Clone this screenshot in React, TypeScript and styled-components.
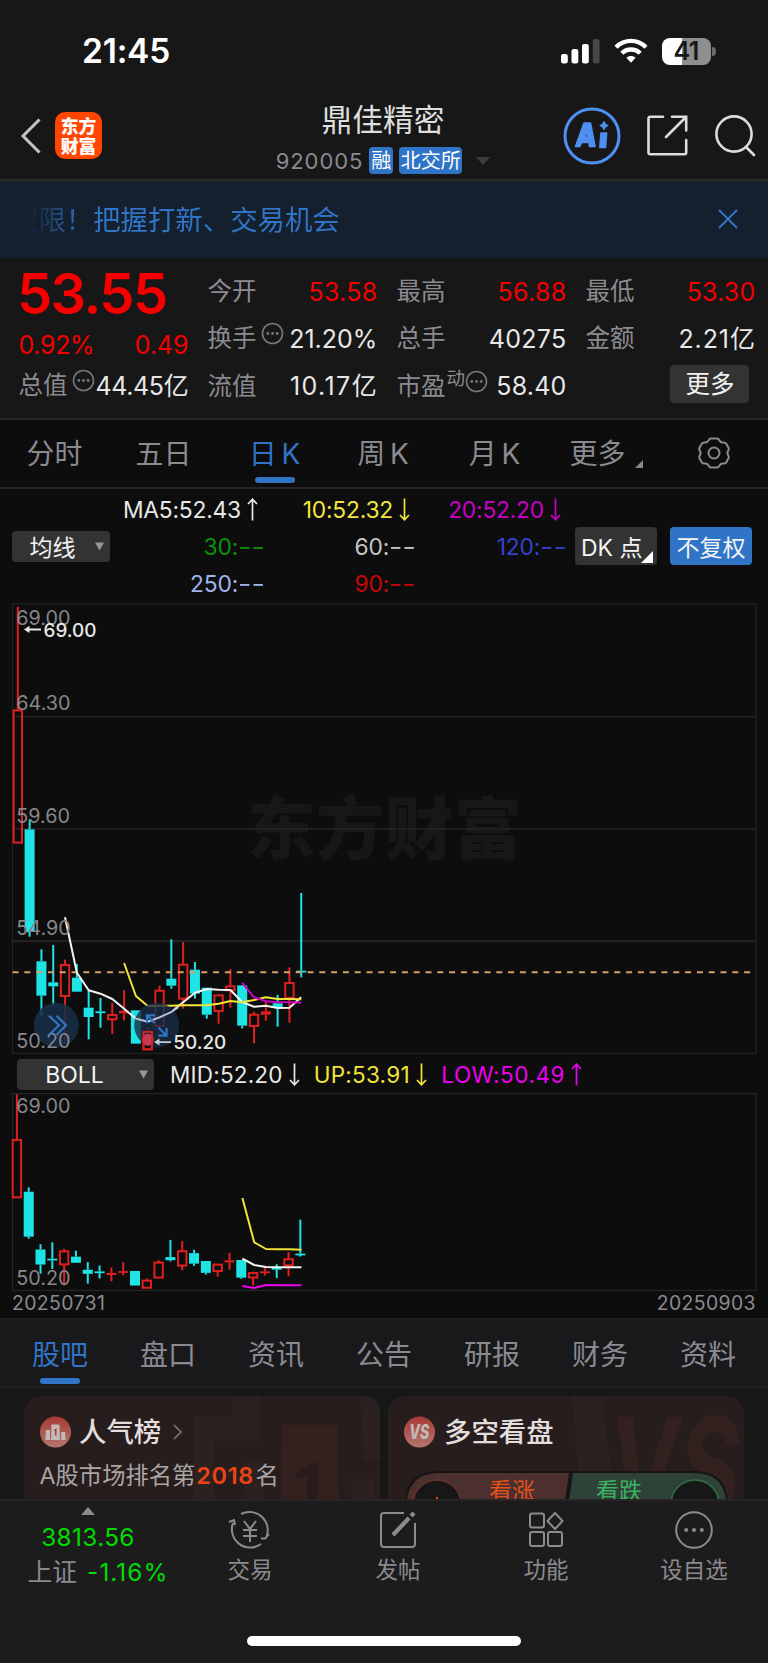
import React from "react";
import styled, { createGlobalStyle } from "styled-components";

const BLUE = "#2f74c6";
const GRAY = "#8b8a90";
const RED = "#f40000";
const CANDLE_RED = "#e02020";
const CYAN = "#1fe4e6";

const Global = createGlobalStyle`
  * { box-sizing: border-box; }
  body { margin: 0; background: #171717; }
`;

const Screen = styled.div`
  width: 768px;
  height: 1663px;
  overflow: hidden;
  display: flex;
  flex-direction: column;
  background: #171717;
  color: #e6e6e6;
  font-family: Inter, "Noto Sans CJK SC", sans-serif;
  white-space: nowrap;
`;

const Label = styled.span<{ size?: number; color?: string; weight?: number; spacing?: number; lead?: number }>`
  font-size: ${(p) => p.size ?? 24.5}px;
  color: ${(p) => p.color ?? "inherit"};
  font-weight: ${(p) => p.weight ?? 400};
  letter-spacing: ${(p) => p.spacing ?? 0}px;
  margin-left: ${(p) => p.lead ?? 0}px;
  line-height: 1.2;
`;

/* ---------- status bar ---------- */
const StatusBar = styled.div`
  height: 102px;
  padding: 0 52px 0 82px;
  display: flex;
  justify-content: space-between;
  align-items: center;
`;
const StatusIcons = styled.div`
  display: flex;
  align-items: center;
  gap: 14px;
`;
const Battery = styled.div`
  width: 49px;
  height: 27px;
  border-radius: 8px;
  background: linear-gradient(90deg, #fff 41%, #8e8e8e 41%);
  color: #171717;
  font-size: 25px;
  font-weight: 600;
  letter-spacing: -0.6px;
  line-height: 27px;
  text-align: center;
`;
const BatteryTip = styled.div`
  width: 4px;
  height: 9px;
  margin-left: -12.5px;
  border-radius: 0 4px 4px 0;
  background: #6b6b6b;
`;

/* ---------- navigation ---------- */
const NavBar = styled.div`
  height: 79px;
  padding: 0 12px 0 20px;
  display: flex;
  justify-content: space-between;
  border-bottom: 2px solid #2b2a29;
`;
const NavSide = styled.div<{ gap: number; wide: number }>`
  display: flex;
  align-items: center;
  gap: ${(p) => p.gap}px;
  width: ${(p) => p.wide}px;
  padding-bottom: 10px;
`;
const Logo = styled.div`
  width: 47px;
  height: 47px;
  border-radius: 10px;
  background: #ff4600;
  color: #fff;
  font: 900 17.8px/20px "Noto Sans CJK SC", sans-serif;
  text-align: center;
  padding-top: 3px;
  white-space: normal;
`;
const NavTitle = styled.div`
  display: flex;
  flex-direction: column;
  align-items: center;
  gap: 8px;
  margin-right: 17px;
`;
const SubTitle = styled.div`
  display: flex;
  align-items: center;
  gap: 6px;
  height: 28px;
`;
const Badge = styled.span<{ wide: number }>`
  width: ${(p) => p.wide}px;
  height: 27px;
  border-radius: 4px;
  background: ${BLUE};
  color: #fff;
  font-size: 20px;
  line-height: 28px;
  display: flex;
  justify-content: center;
`;

/* ---------- banner ---------- */
const Banner = styled.div`
  height: 77px;
  padding: 0 30px 2px 11px;
  display: flex;
  align-items: center;
  justify-content: space-between;
  background: #15202e;
  color: ${BLUE};
`;
const BannerText = styled.div`
  font-size: 27.4px;
  line-height: 40px;
  padding-top: 2px;
  mask-image: linear-gradient(90deg, transparent 18px, #000 75px);
`;

/* ---------- quote ---------- */
const Quote = styled.div`
  height: 162px;
  padding: 10px 13px 0 18.4px;
  display: grid;
  grid-template-columns: repeat(4, 169px);
  column-gap: 20px;
  border-bottom: 2px solid #262628;
`;
const QuoteColumn = styled.div`
  display: flex;
  flex-direction: column;
`;
const QuoteRow = styled.div<{ tall?: number }>`
  height: ${(p) => p.tall ?? 47.3}px;
  display: flex;
  align-items: center;
`;
const Value = styled.span<{ color?: string; spacing?: number }>`
  margin-left: auto;
  margin-right: ${(p) => -1 - (p.spacing ?? 0.3) * 0.5}px;
  font-size: 25px;
  line-height: 30px;
  letter-spacing: ${(p) => p.spacing ?? 0.3}px;
  color: ${(p) => p.color ?? "#e8e8e8"};
`;
const Superscript = styled.span`
  font-size: 18.5px;
  line-height: 20px;
  color: ${GRAY};
  margin: 0 0 17px 1px;
`;
const MoreButton = styled.div`
  width: 79px;
  height: 38px;
  margin: -5px 5px 0 auto;
  border-radius: 4px;
  background: #333333;
  color: #f2f2f2;
  font-size: 24.5px;
  line-height: 38px;
  text-align: center;
`;

/* ---------- tabs ---------- */
const PeriodTabs = styled.div`
  height: 69px;
  display: flex;
  background: #0d0d0d;
  border-bottom: 2px solid #262628;
`;
const Tab = styled.div<{ wide?: number; active?: boolean; rise?: number }>`
  ${(p) => (p.wide ? `width: ${p.wide}px;` : "flex: 1;")}
  height: 100%;
  display: flex;
  flex-direction: column;
  align-items: center;
  justify-content: flex-end;
  padding-bottom: ${(p) => p.rise ?? 4}px;
  color: ${(p) => (p.active ? BLUE : GRAY)};
  font-size: 28px;
  line-height: 40px;
  word-spacing: -3px;
  &::after {
    content: "";
    width: 40px;
    height: 6px;
    margin-top: 3px;
    border-radius: 3px;
    background: ${(p) => (p.active ? BLUE : "transparent")};
  }
`;
const TabLine = styled.div`
  display: flex;
  align-items: center;
  height: 40px;
`;

/* ---------- indicator rows ---------- */
const ChartArea = styled.div`
  height: 829px;
  background: #0d0d0d;
  display: flex;
  flex-direction: column;
`;
const Averages = styled.div`
  height: 114px;
  padding: 0 16px 0 12px;
  display: flex;
  align-items: center;
`;
const AverageGrid = styled.div`
  width: 467px;
  height: 111px;
  display: flex;
  flex-direction: column;
`;
const AverageRow = styled.div`
  height: 37px;
  display: flex;
  align-items: center;
`;
const AverageCell = styled.div<{ color: string; wide: number }>`
  width: ${(p) => p.wide}px;
  display: flex;
  align-items: center;
  justify-content: flex-end;
  color: ${(p) => p.color};
  font-size: 22.8px;
  letter-spacing: -0.2px;
`;
const Dashes = styled.span`
  display: inline-block;
  letter-spacing: 0;
  margin-left: 6px;
  transform: scaleX(1.28);
  transform-origin: right;
`;
const Picker = styled.div<{ wide: number; tall: number; fill?: string }>`
  flex: none;
  width: ${(p) => p.wide}px;
  height: ${(p) => p.tall}px;
  padding: 0 6px;
  display: flex;
  align-items: center;
  justify-content: space-between;
  border-radius: 4px;
  background: ${(p) => p.fill ?? "#333333"};
  color: #f4f4f4;
  font-size: 23px;
`;
const PickerText = styled.span<{ shift?: number }>`
  flex: 1;
  padding-right: ${(p) => p.shift ?? 0}px;
  text-align: center;
`;
const SideButtons = styled.div`
  display: flex;
  gap: 13px;
  margin-left: -2px;
`;
const BollRow = styled.div`
  height: 39px;
  padding: 2px 0 0 17px;
  display: flex;
  align-items: center;
`;
const BollValue = styled.div<{ color: string; lead: number; spacing: number }>`
  display: flex;
  align-items: center;
  margin-left: ${(p) => p.lead}px;
  color: ${(p) => p.color};
  font-size: 22.5px;
  letter-spacing: ${(p) => p.spacing}px;
`;
const ChartSvg = styled.svg`
  display: block;
  flex: none;
  font-family: Inter, "Noto Sans CJK SC", sans-serif;
`;
const Dates = styled.div`
  height: 27px;
  padding: 0 12px 2px;
  display: flex;
  justify-content: space-between;
  align-items: center;
`;

/* ---------- community section ---------- */
const SectionTabs = styled.div`
  height: 70px;
  padding: 0 6px;
  display: flex;
  background: #19191b;
  border-bottom: 1px solid #222225;
  border-top: 1px solid #222225;
`;
const Cards = styled.div`
  height: 111px;
  overflow: hidden;
  padding: 8px 24px 0;
  display: grid;
  grid-template-columns: 1fr 1fr;
  gap: 8px;
`;
const Card = styled.div`
  position: relative;
  height: 160px;
  overflow: hidden;
  border-radius: 17px;
  background: #271d1d;
`;
const CardArt = styled.svg`
  position: absolute;
  inset: 0;
`;
const CardBody = styled.div`
  position: relative;
  padding: 17px 16px 0;
`;
const CardHead = styled.div`
  display: flex;
  align-items: center;
  height: 38px;
`;
const RankLine = styled.div`
  display: flex;
  align-items: center;
  height: 40px;
  margin-top: 5px;
  color: #aaa5a5;
`;
const Poll = styled.div`
  position: relative;
  height: 56px;
  margin: 20px 0 0 1px;
  width: 323px;
`;
const PollLabels = styled.div`
  position: absolute;
  inset: 7px 0 auto 0;
  display: flex;
  padding-left: 84px;
  gap: 61px;
`;

/* ---------- bottom bar ---------- */
const BottomBar = styled.div`
  height: 164px;
  background: #1c1c1c;
  border-top: 2px solid #262424;
  display: flex;
  flex-direction: column;
  align-items: center;
`;
const BottomItems = styled.div`
  width: 768px;
  height: 135px;
  display: flex;
`;
const IndexBox = styled.div`
  width: 176px;
  padding-top: 6px;
  display: flex;
  flex-direction: column;
  align-items: center;
`;
const IndexRow = styled.div<{ top: number; shift: number }>`
  display: flex;
  align-items: center;
  height: 34px;
  margin-top: ${(p) => p.top}px;
  margin-left: ${(p) => p.shift}px;
`;
const BottomItem = styled.div`
  width: 148px;
  padding-top: 8px;
  display: flex;
  flex-direction: column;
  align-items: center;
  gap: 2px;
  color: ${GRAY};
  font-size: 22.5px;
  line-height: 34px;
`;
const HomeIndicator = styled.div`
  width: 274px;
  height: 10px;
  border-radius: 5px;
  background: #fff;
`;

/* ---------- small drawings ---------- */
const DotsSvg = styled.svg<{ lead: number }>`
  flex: none;
  margin: 0 0 10px ${(p) => p.lead}px;
`;
const Dots = ({ lead = 0 }: { lead?: number }) => (
  <DotsSvg lead={lead} width="23" height="23" viewBox="0 0 23 23" fill="none">
    <circle cx="11.5" cy="11.5" r="10" stroke="#77767a" strokeWidth="1.6" />
    <g fill="#77767a">
      <circle cx="6.8" cy="11.5" r="1.4" />
      <circle cx="11.5" cy="11.5" r="1.4" />
      <circle cx="16.2" cy="11.5" r="1.4" />
    </g>
  </DotsSvg>
);

const ArrowSvg = styled.svg`
  margin-left: 6px;
`;
const Arrow = ({ down }: { down?: boolean }) => (
  <ArrowSvg width="11" height="23" viewBox="0 0 11 23" fill="none" stroke="currentColor" strokeWidth="1.7">
    {down ? <path d="M5.5 0.5V21.5M1 17L5.5 21.8L10 17" /> : <path d="M5.5 22.5V1.5M1 6L5.5 1.2L10 6" />}
  </ArrowSvg>
);

const Caret = () => (
  <svg width="9" height="9" viewBox="0 0 9 9">
    <path d="M0 0.5H9L4.5 8.5Z" fill="#98979c" />
  </svg>
);
const TitleCaret = styled.svg`
  margin-left: 8px;
`;
const MoreCorner = styled.svg`
  margin: 20px 0 0 9px;
`;
const PointCorner = styled.svg`
  flex: none;
  margin: 22px 0 0 -2px;
`;
const GearSvg = styled.svg`
  margin: 0 0 2px 1px;
`;
const HeadChevron = styled.svg`
  margin-left: 12px;
`;

/* ---------- chart data ----------
   Each candle: rising flag, high, body top, body bottom, low.
   Levels count down from the top of the pane in thirds of a pixel. */
type Candle = [boolean, number, number, number, number];
const candles: Candle[] = [
  [true, 20, 330, 729, 729],
  [false, 658, 688, 996, 1010],
  [false, 1048, 1084, 1187, 1250],
  [false, 1035, 1147, 1159, 1218],
  [true, 1079, 1094, 1189, 1330],
  [false, 1092, 1133, 1175, 1175],
  [false, 1170, 1223, 1251, 1318],
  [false, 1194, 1234, 1239, 1283],
  [true, 1208, 1244, 1259, 1302],
  [true, 1170, 1232, 1240, 1261],
  [false, 1231, 1231, 1331, 1331],
  [true, 1282, 1295, 1349, 1349],
  [true, 1157, 1171, 1279, 1279],
  [false, 1018, 1136, 1157, 1166],
  [true, 1026, 1093, 1197, 1226],
  [false, 1086, 1109, 1181, 1196],
  [false, 1163, 1163, 1244, 1256],
  [true, 1184, 1185, 1234, 1271],
  [true, 1107, 1158, 1172, 1223],
  [false, 1156, 1156, 1277, 1285],
  [true, 1236, 1243, 1279, 1330],
  [true, 1205, 1234, 1244, 1262],
  [false, 1185, 1210, 1222, 1280],
  [true, 1102, 1148, 1195, 1268],
  [false, 879, 1112, 1117, 1132],
];
const ma5 = [952, 1118, 1171, 1181, 1197, 1226, 1256, 1265, 1252, 1236, 1207, 1178, 1167, 1169, 1170, 1206, 1220, 1217, 1224, 1223, 1192];
const ma10 = [1089, 1188, 1218, 1217, 1217, 1216, 1216, 1216, 1211, 1203, 1207, 1200, 1192, 1197, 1197, 1198];
const ma20 = [1148, 1192, 1204, 1207, 1207, 1208];
const STEP = 11.81;

const mainY = (v: number) => v / 3 - 3;
const bollY = (v: number) => 1.3 + ((v - 20) / 1330) * 194;
const bandY = (v: number) => v / 3 - 38;

const line = (values: number[], first: number, x0: number, y: (v: number) => number) =>
  values.map((v, i) => `${(x0 + (first + i) * STEP).toFixed(1)},${y(v).toFixed(1)}`).join(" ");

const Candles = ({ x0, y }: { x0: number; y: (v: number) => number }) => (
  <g>
    {candles.map(([up, high, top, bottom, low], i) => {
      const x = x0 + i * STEP;
      const bodyTop = y(top);
      const height = Math.max(y(bottom) - bodyTop, 1.8);
      const color = up ? CANDLE_RED : CYAN;
      const hollow = up && height > 3.6;
      return (
        <g key={i} stroke={color} strokeWidth="2">
          {high < top && <line x1={x} x2={x} y1={y(high)} y2={bodyTop} />}
          {low > bottom && <line x1={x} x2={x} y1={y(bottom)} y2={y(low)} />}
          {hollow ? (
            <rect x={x - 4.2} y={bodyTop + 0.4} width="8.4" height={Math.max(height - 0.8, 2)} fill="none" />
          ) : (
            <rect x={x - 5} y={bodyTop} width="10" height={height} fill={color} stroke="none" />
          )}
        </g>
      );
    })}
  </g>
);

const MainChart = () => (
  <ChartSvg width="768" height="451" viewBox="0 0 768 451">
    <text x="247" y="251" fontSize="68.5" fontWeight="900" fill="#171717" textLength="275" lengthAdjust="spacing">东方财富</text>
    <g stroke="#222223" strokeWidth="1.8" fill="none">
      <rect x="12.5" y="0.8" width="743.5" height="449.6" strokeWidth="1.2" />
      <path d="M12 113.7H756M12 225.9H756M12 338H756" />
    </g>
    <Candles x0={17.8} y={mainY} />
    <path d="M12.5 369.2H752" stroke="#d6a064" strokeWidth="2" strokeDasharray="6 5.8" />
    <g fill="none" strokeWidth="2" strokeLinejoin="round">
      <polyline points={line(ma5, 4, 17.8, mainY)} stroke="#f4f4f4" />
      <polyline points={line(ma10, 9, 17.8, mainY)} stroke="#f2e53a" />
      <polyline points={line(ma20, 19, 17.8, mainY)} stroke="#c800c8" />
    </g>
    <g fontSize="19.8" fill="#87868b">
      <text x="16.3" y="21.7">69.00</text>
      <text x="16.3" y="107.2">64.30</text>
      <text x="16.3" y="219.9">59.60</text>
      <text x="16.3" y="332">54.90</text>
    </g>
    <g fill="#182d47" fillOpacity="0.88">
      <circle cx="56.3" cy="422.3" r="22.5" />
      <circle cx="156.7" cy="422.3" r="22.5" fillOpacity="0.8" />
    </g>
    <text x="16.3" y="444.8" fontSize="19.8" fill="#87868b">50.20</text>
    <polyline points="135.9,415.7 147.7,418.7 159.5,414.3 171.3,409 178,404.5" fill="none" stroke="#b9c6d8" strokeWidth="1.8" />
    <circle cx="147.7" cy="436.7" r="6" fill="#c43a52" />
    <path d="M143.5 428.9V446.5H152V428.9Z" fill="none" stroke={CANDLE_RED} strokeWidth="1.7" />
    <g fill="none" stroke={BLUE} strokeWidth="2.2">
      <path d="M49 412.7L59 422.3L49 432M56.5 412.7L66 422.3L56.5 432" />
      <path d="M155 412.3H147V420.3M147.5 412.8L154.5 420M158.5 432.7H166.5V424.7M158.5 424.5L166 432.2" />
    </g>
    <g fill="#e6e6e6" stroke="none" fontSize="18.9" fontWeight="500">
      <path d="M24 26.4L29.5 22.8V30ZM29 25.6H41V27.4H29Z" />
      <text x="43.5" y="33.5">69.00</text>
      <path d="M154 439L159.5 435.4V442.6ZM159 438.2H171V440H159Z" fill="#c3cad6" />
      <text x="173.3" y="446.3">50.20</text>
    </g>
  </ChartSvg>
);

const BollChart = () => (
  <ChartSvg width="768" height="198" viewBox="0 0 768 198">
    <rect x="12.5" y="0.6" width="743.5" height="196.8" fill="none" stroke="#252526" strokeWidth="1.2" />
    <Candles x0={16.9} y={bollY} />
    <g fontSize="19.8" fill="#87868b">
      <text x="16.3" y="19.5">69.00</text>
      <text x="16.3" y="192.3">50.20</text>
    </g>
    <g fill="none" strokeWidth="2" strokeLinejoin="round">
      <polyline points={line([429, 562, 582, 583, 583, 584], 19, 18, bandY)} stroke="#f2e53a" />
      <polyline points={line([611, 630, 636, 637, 637, 637], 19, 18, bandY)} stroke="#f4f4f4" />
      <polyline points={line([693, 699, 690, 691, 691, 691], 19, 18, bandY)} stroke="#f000f0" />
    </g>
  </ChartSvg>
);

const WifiIcon = () => (
  <svg width="34" height="26" viewBox="0 0 34 26" fill="none" stroke="#fff" strokeWidth="4.4">
    <path d="M2 9.2C10.5 0.8 23.5 0.8 32 9.2" />
    <path d="M7.8 15.3C13 10.2 21 10.2 26.2 15.3" />
    <path d="M12.4 19.7C15 17.3 19 17.3 21.6 19.7L17 24.8Z" fill="#fff" stroke="none" />
  </svg>
);

const AiIcon = () => (
  <svg width="58" height="58" viewBox="0 0 58 58">
    <circle cx="29" cy="29" r="27" fill="none" stroke="#4f8ff2" strokeWidth="3" />
    <g fill="#4f8ff2" stroke="#4f8ff2" strokeWidth="1.6" strokeLinejoin="round">
      <path fillRule="evenodd" d="M21 16H27.5L32 39.5H26.5L25.9 35.5H18.6L16.8 39.5H12.5ZM24.2 24L21.8 30.2H25Z" />
      <path d="M38 26H43.6L42.5 40.5H36.8Z" />
      <path d="M41 15L42.3 17.4L44.6 18.6L42.3 19.8L41 22.2L39.7 19.8L37.4 18.6L39.7 17.4Z" />
    </g>
  </svg>
);

const periodTabs: [string, number][] = [["分时", 109], ["五日", 109], ["日 K", 113], ["周 K", 104], ["月 K", 119]];
const sections = ["股吧", "盘口", "资讯", "公告", "研报", "财务", "资料"];

export default function App() {
  return (
    <Screen>
      <Global />
      <StatusBar>
        <Label size={33.5} weight={600} color="#fff" spacing={-0.2}>21:45</Label>
        <StatusIcons>
          <svg width="39" height="25" viewBox="0 0 39 25" fill="#fff">
            <rect x="0" y="15" width="6.8" height="9.5" rx="2.2" />
            <rect x="10.5" y="10" width="6.8" height="14.5" rx="2.2" />
            <rect x="21" y="5" width="6.8" height="19.5" rx="2.2" />
            <rect x="31.8" y="0" width="6.8" height="24.5" rx="2.2" fill="#474747" />
          </svg>
          <WifiIcon />
          <Battery>41</Battery>
          <BatteryTip />
        </StatusIcons>
      </StatusBar>

      <NavBar>
        <NavSide gap={14} wide={200}>
          <svg width="21" height="36" viewBox="0 0 21 36" fill="none" stroke="#c4c4c4" strokeWidth="3">
            <path d="M19.5 1.5L3 18L19.5 34.5" />
          </svg>
          <Logo>东方<br />财富</Logo>
        </NavSide>
        <NavTitle>
          <Label size={30.8} color="#dedede">鼎佳精密</Label>
          <SubTitle>
            <Label size={22} color={GRAY} spacing={0.9}>920005</Label>
            <Badge wide={24}>融</Badge>
            <Badge wide={63}>北交所</Badge>
            <TitleCaret width="14" height="8" viewBox="0 0 14 8">
              <path d="M0 0H14L7 8Z" fill="#3b3b3d" />
            </TitleCaret>
          </SubTitle>
        </NavTitle>
        <NavSide gap={26} wide={193}>
          <AiIcon />
          <svg width="41" height="41" viewBox="0 0 41 41" fill="none" stroke="#dcdcdc" strokeWidth="2.6" strokeLinecap="round">
            <path d="M16 1.7H3.2Q1.5 1.7 1.5 3.4V37.5Q1.5 39.2 3.2 39.2H37.5Q39.2 39.2 39.2 37.5V25M25 1.7H39.2V15.5M38 3L19 22" />
          </svg>
          <svg width="42" height="42" viewBox="0 0 42 42" fill="none" stroke="#dcdcdc" strokeWidth="2.6" strokeLinecap="round">
            <circle cx="20" cy="19" r="17.6" />
            <path d="M32 32L40 40" />
          </svg>
        </NavSide>
      </NavBar>

      <Banner>
        <BannerText>权限！把握打新、交易机会</BannerText>
        <svg width="20" height="20" viewBox="0 0 20 20" stroke={BLUE} strokeWidth="2">
          <path d="M1 1L19 19M19 1L1 19" />
        </svg>
      </Banner>

      <Quote>
        <QuoteColumn>
          <QuoteRow tall={54}><Label size={56} weight={600} color={RED} spacing={-1.5} lead={-1.5}>53.55</Label></QuoteRow>
          <QuoteRow tall={46}>
            <Label size={25} color={RED} spacing={-0.3}>0.92%</Label>
            <Value color={RED} spacing={-0.1}>0.49</Value>
          </QuoteRow>
          <QuoteRow tall={35}>
            <Label color={GRAY}>总值</Label>
            <Dots lead={5} />
            <Value spacing={-0.35}>44.45亿</Value>
          </QuoteRow>
        </QuoteColumn>
        <QuoteColumn>
          <QuoteRow><Label color={GRAY}>今开</Label><Value color={RED}>53.58</Value></QuoteRow>
          <QuoteRow><Label color={GRAY}>换手</Label><Dots lead={5} /><Value spacing={0}>21.20%</Value></QuoteRow>
          <QuoteRow><Label color={GRAY}>流值</Label><Value spacing={1.4}>10.17亿</Value></QuoteRow>
        </QuoteColumn>
        <QuoteColumn>
          <QuoteRow><Label color={GRAY}>最高</Label><Value color={RED}>56.88</Value></QuoteRow>
          <QuoteRow><Label color={GRAY}>总手</Label><Value>40275</Value></QuoteRow>
          <QuoteRow><Label color={GRAY}>市盈</Label><Superscript>动</Superscript><Dots /><Value spacing={0.2}>58.40</Value></QuoteRow>
        </QuoteColumn>
        <QuoteColumn>
          <QuoteRow><Label color={GRAY}>最低</Label><Value color={RED} spacing={0.2}>53.30</Value></QuoteRow>
          <QuoteRow><Label color={GRAY}>金额</Label><Value spacing={0.9}>2.21亿</Value></QuoteRow>
          <QuoteRow><MoreButton>更多</MoreButton></QuoteRow>
        </QuoteColumn>
      </Quote>

      <PeriodTabs>
        {periodTabs.map(([name, wide], i) => (
          <Tab key={name} wide={wide} active={i === 2}>{name}</Tab>
        ))}
        <Tab wide={104}>
          <TabLine>
            更多
            <MoreCorner width="8" height="8" viewBox="0 0 8 8">
              <path d="M8 0V8H0Z" fill={GRAY} />
            </MoreCorner>
          </TabLine>
        </Tab>
        <Tab>
          <TabLine>
            <GearSvg width="34" height="34" viewBox="0 0 34 34" fill="none" stroke={GRAY} strokeWidth="2">
              <path strokeLinejoin="round" d="M14 2.5H20Q21.5 2.5 22.3 4.2Q23.4 6.6 26 6.4Q28.3 6.2 29.3 7.8L31.6 12Q32.2 13.4 31.2 14.6Q29.6 17 31.2 19.4Q32.2 20.6 31.6 22L29.3 26.2Q28.3 27.8 26 27.6Q23.4 27.4 22.3 29.8Q21.5 31.5 20 31.5H14Q12.5 31.5 11.7 29.8Q10.6 27.4 8 27.6Q5.7 27.8 4.7 26.2L2.4 22Q1.8 20.6 2.8 19.4Q4.4 17 2.8 14.6Q1.8 13.4 2.4 12L4.7 7.8Q5.7 6.2 8 6.4Q10.6 6.6 11.7 4.2Q12.5 2.5 14 2.5Z" />
              <circle cx="17" cy="17" r="5.5" />
            </GearSvg>
          </TabLine>
        </Tab>
      </PeriodTabs>

      <ChartArea>
        <Averages>
          <Picker wide={98} tall={31}><PickerText shift={8}>均线</PickerText><Caret /></Picker>
          <AverageGrid>
            <AverageRow>
              <AverageCell color="#e8e8e8" wide={148}>MA5:52.43<Arrow /></AverageCell>
              <AverageCell color="#f2e53a" wide={152}>10:52.32<Arrow down /></AverageCell>
              <AverageCell color="#c800c8" wide={151}>20:52.20<Arrow down /></AverageCell>
            </AverageRow>
            <AverageRow>
              <AverageCell color="#069406" wide={155}>30:<Dashes>--</Dashes></AverageCell>
              <AverageCell color="#c4c4c4" wide={151}>60:<Dashes>--</Dashes></AverageCell>
              <AverageCell color="#3342d0" wide={151}>120:<Dashes>--</Dashes></AverageCell>
            </AverageRow>
            <AverageRow>
              <AverageCell color="#9db4ea" wide={155}>250:<Dashes>--</Dashes></AverageCell>
              <AverageCell color="#c80808" wide={151}>90:<Dashes>--</Dashes></AverageCell>
            </AverageRow>
          </AverageGrid>
          <SideButtons>
            <Picker wide={82} tall={38}>
              <span>DK 点</span>
              <PointCorner width="12" height="12" viewBox="0 0 12 12">
                <path d="M12 0V12H0Z" fill="#fff" />
              </PointCorner>
            </Picker>
            <Picker wide={82} tall={38} fill={BLUE}><PickerText>不复权</PickerText></Picker>
          </SideButtons>
        </Averages>
        <MainChart />
        <BollRow>
          <Picker wide={137} tall={31}><PickerText shift={13}>BOLL</PickerText><Caret /></Picker>
          <BollValue color="#e8e8e8" lead={16} spacing={0.2}>MID:52.20<Arrow down /></BollValue>
          <BollValue color="#f2e53a" lead={14} spacing={0.25}>UP:53.91<Arrow down /></BollValue>
          <BollValue color="#f000f0" lead={14.5} spacing={0.5}>LOW:50.49<Arrow /></BollValue>
        </BollRow>
        <BollChart />
        <Dates>
          <Label size={19.4} color={GRAY} spacing={0.4}>20250731</Label>
          <Label size={19.4} color={GRAY} spacing={0.4}>20250903</Label>
        </Dates>
      </ChartArea>

      <SectionTabs>
        {sections.map((name, i) => (
          <Tab key={name} active={i === 0} rise={3}>{name}</Tab>
        ))}
      </SectionTabs>

      <Cards>
        <Card>
          <CardArt width="356" height="160" viewBox="0 0 356 160">
            <path d="M170 160V20H208V0H235V45H190V160Z" fill="#2b2120" />
            <path d="M220 160V65H240V160ZM327 160V83H350V160ZM336 0H356V64H340Z" fill="#2b2120" />
            <path d="M258 29H314L316 160H256Z" fill="#33201f" />
            <path d="M272 76L294 65V110H283V80L272 83Z" fill="#281c1b" />
          </CardArt>
          <CardBody>
            <CardHead>
              <svg width="32" height="32" viewBox="0 0 32 32">
                <defs>
                  <linearGradient id="rose" x1="0" y1="0" x2="0" y2="1">
                    <stop offset="0" stopColor="#a83a34" />
                    <stop offset="1" stopColor="#b37770" />
                  </linearGradient>
                </defs>
                <circle cx="15.5" cy="16" r="15.5" fill="url(#rose)" />
                <path d="M6 14H10V24H5.3ZM11.5 8.5H19.5L20 24H11ZM21.3 16H25L25.7 24H21.3Z" fill="#c3b9b7" />
                <path d="M14 13.5L16.6 12.3V19.5H15V14.5L14 14.8Z" fill="#a2453f" />
              </svg>
              <Label size={27.4} weight={500} color="#e2dede" lead={7}>人气榜</Label>
              <HeadChevron width="10" height="16" viewBox="0 0 10 16" fill="none" stroke="#7d7474" strokeWidth="1.7">
                <path d="M1 1L8 8L1 15" />
              </HeadChevron>
            </CardHead>
            <RankLine>
              <Label size={23.3} lead={-0.5}>A股市场排名第</Label>
              <Label size={23.5} weight={600} color="#ea4414" lead={1} spacing={0.6}>2018</Label>
              <Label size={23.3} lead={1.5}>名</Label>
            </RankLine>
          </CardBody>
        </Card>
        <Card>
          <CardArt width="356" height="160" viewBox="0 0 356 160">
            <path d="M184 0H214L226 100H192Z" fill="#2b2120" />
            <text x="220" y="121" fontSize="138" fontWeight="700" fontStyle="italic" fontFamily="Inter, sans-serif" fill="#32211f" textLength="132" lengthAdjust="spacingAndGlyphs">VS</text>
          </CardArt>
          <CardBody>
            <CardHead>
              <svg width="32" height="32" viewBox="0 0 32 32">
                <circle cx="15.5" cy="16" r="15.5" fill="url(#rose)" />
                <text x="5.3" y="23" fontSize="19.5" fontWeight="800" fontStyle="italic" fontFamily="Inter, sans-serif" fill="#c3b9b7" textLength="20" lengthAdjust="spacingAndGlyphs">VS</text>
              </svg>
              <Label size={27.4} weight={500} color="#e2dede" lead={8}>多空看盘</Label>
            </CardHead>
            <Poll>
              <svg width="323" height="56" viewBox="0 0 323 56">
                <path d="M0 30Q2 0 34 0H289Q321 0 323 30V56H0Z" fill="#171414" />
                <path d="M2 28Q6 2 34 2H164L156 56H2Z" fill="#4b302d" />
                <path d="M168 2H289Q317 2 321 28V56H160Z" fill="#2f4238" />
                <circle cx="32" cy="33" r="24" fill="#171718" stroke="#67322e" strokeWidth="1.5" />
                <circle cx="290" cy="33" r="24" fill="#171718" stroke="#2f7048" strokeWidth="1.5" />
                <path d="M31 26H33V32H31Z" fill="#ea4a14" />
              </svg>
              <PollLabels>
                <Label size={23} color="#e2501c">看涨</Label>
                <Label size={23} color="#3bb263">看跌</Label>
              </PollLabels>
            </Poll>
          </CardBody>
        </Card>
      </Cards>

      <BottomBar>
        <BottomItems>
          <IndexBox>
            <svg width="14" height="8" viewBox="0 0 14 8"><path d="M7 0L14 8H0Z" fill={GRAY} /></svg>
            <IndexRow top={6} shift={0}><Label size={24.3} color="#00dc00" spacing={0.4}>3813.56</Label></IndexRow>
            <IndexRow top={1} shift={20}>
              <Label size={24.8} color={GRAY}>上证</Label>
              <Label size={24.3} color="#00dc00" lead={10} spacing={1.1}>-1.16%</Label>
            </IndexRow>
          </IndexBox>
          <BottomItem>
            <svg width="44" height="42" viewBox="0 0 44 42" fill="none" stroke={GRAY} strokeWidth="2">
              <path d="M13 5A18.3 18.3 0 0 1 38 29M41 25L37 29.5H33M33 35A18.3 18.3 0 0 1 5 14M1 13L6 11L7 16" />
              <path d="M16 12L22 20L28 12M15 21H29M15 27H29M22 20V33" />
            </svg>
            交易
          </BottomItem>
          <BottomItem>
            <svg width="40" height="42" viewBox="0 0 40 42" fill="none" stroke={GRAY} strokeWidth="2">
              <path d="M26 4H6Q3 4 3 7V35Q3 38 6 38H34Q37 38 37 35V14" />
              <path d="M15 26L31 9M33 7L36 4" strokeWidth="4.2" />
            </svg>
            发帖
          </BottomItem>
          <BottomItem>
            <svg width="40" height="42" viewBox="0 0 40 42" fill="none" stroke={GRAY} strokeWidth="2">
              <rect x="4" y="4.5" width="14" height="14" rx="2" />
              <rect x="4" y="23" width="14" height="14" rx="2" />
              <rect x="22" y="23" width="14" height="14" rx="2" />
              <path d="M29 4L36.5 12L29 20L21.5 12Z" strokeLinejoin="round" />
            </svg>
            功能
          </BottomItem>
          <BottomItem>
            <svg width="40" height="42" viewBox="0 0 40 42" fill="none">
              <circle cx="20" cy="21" r="17.8" stroke={GRAY} strokeWidth="2" />
              <g fill={GRAY}>
                <circle cx="12.2" cy="21" r="2" />
                <circle cx="20" cy="21" r="2" />
                <circle cx="27.8" cy="21" r="2" />
              </g>
            </svg>
            设自选
          </BottomItem>
        </BottomItems>
        <HomeIndicator />
      </BottomBar>
    </Screen>
  );
}
